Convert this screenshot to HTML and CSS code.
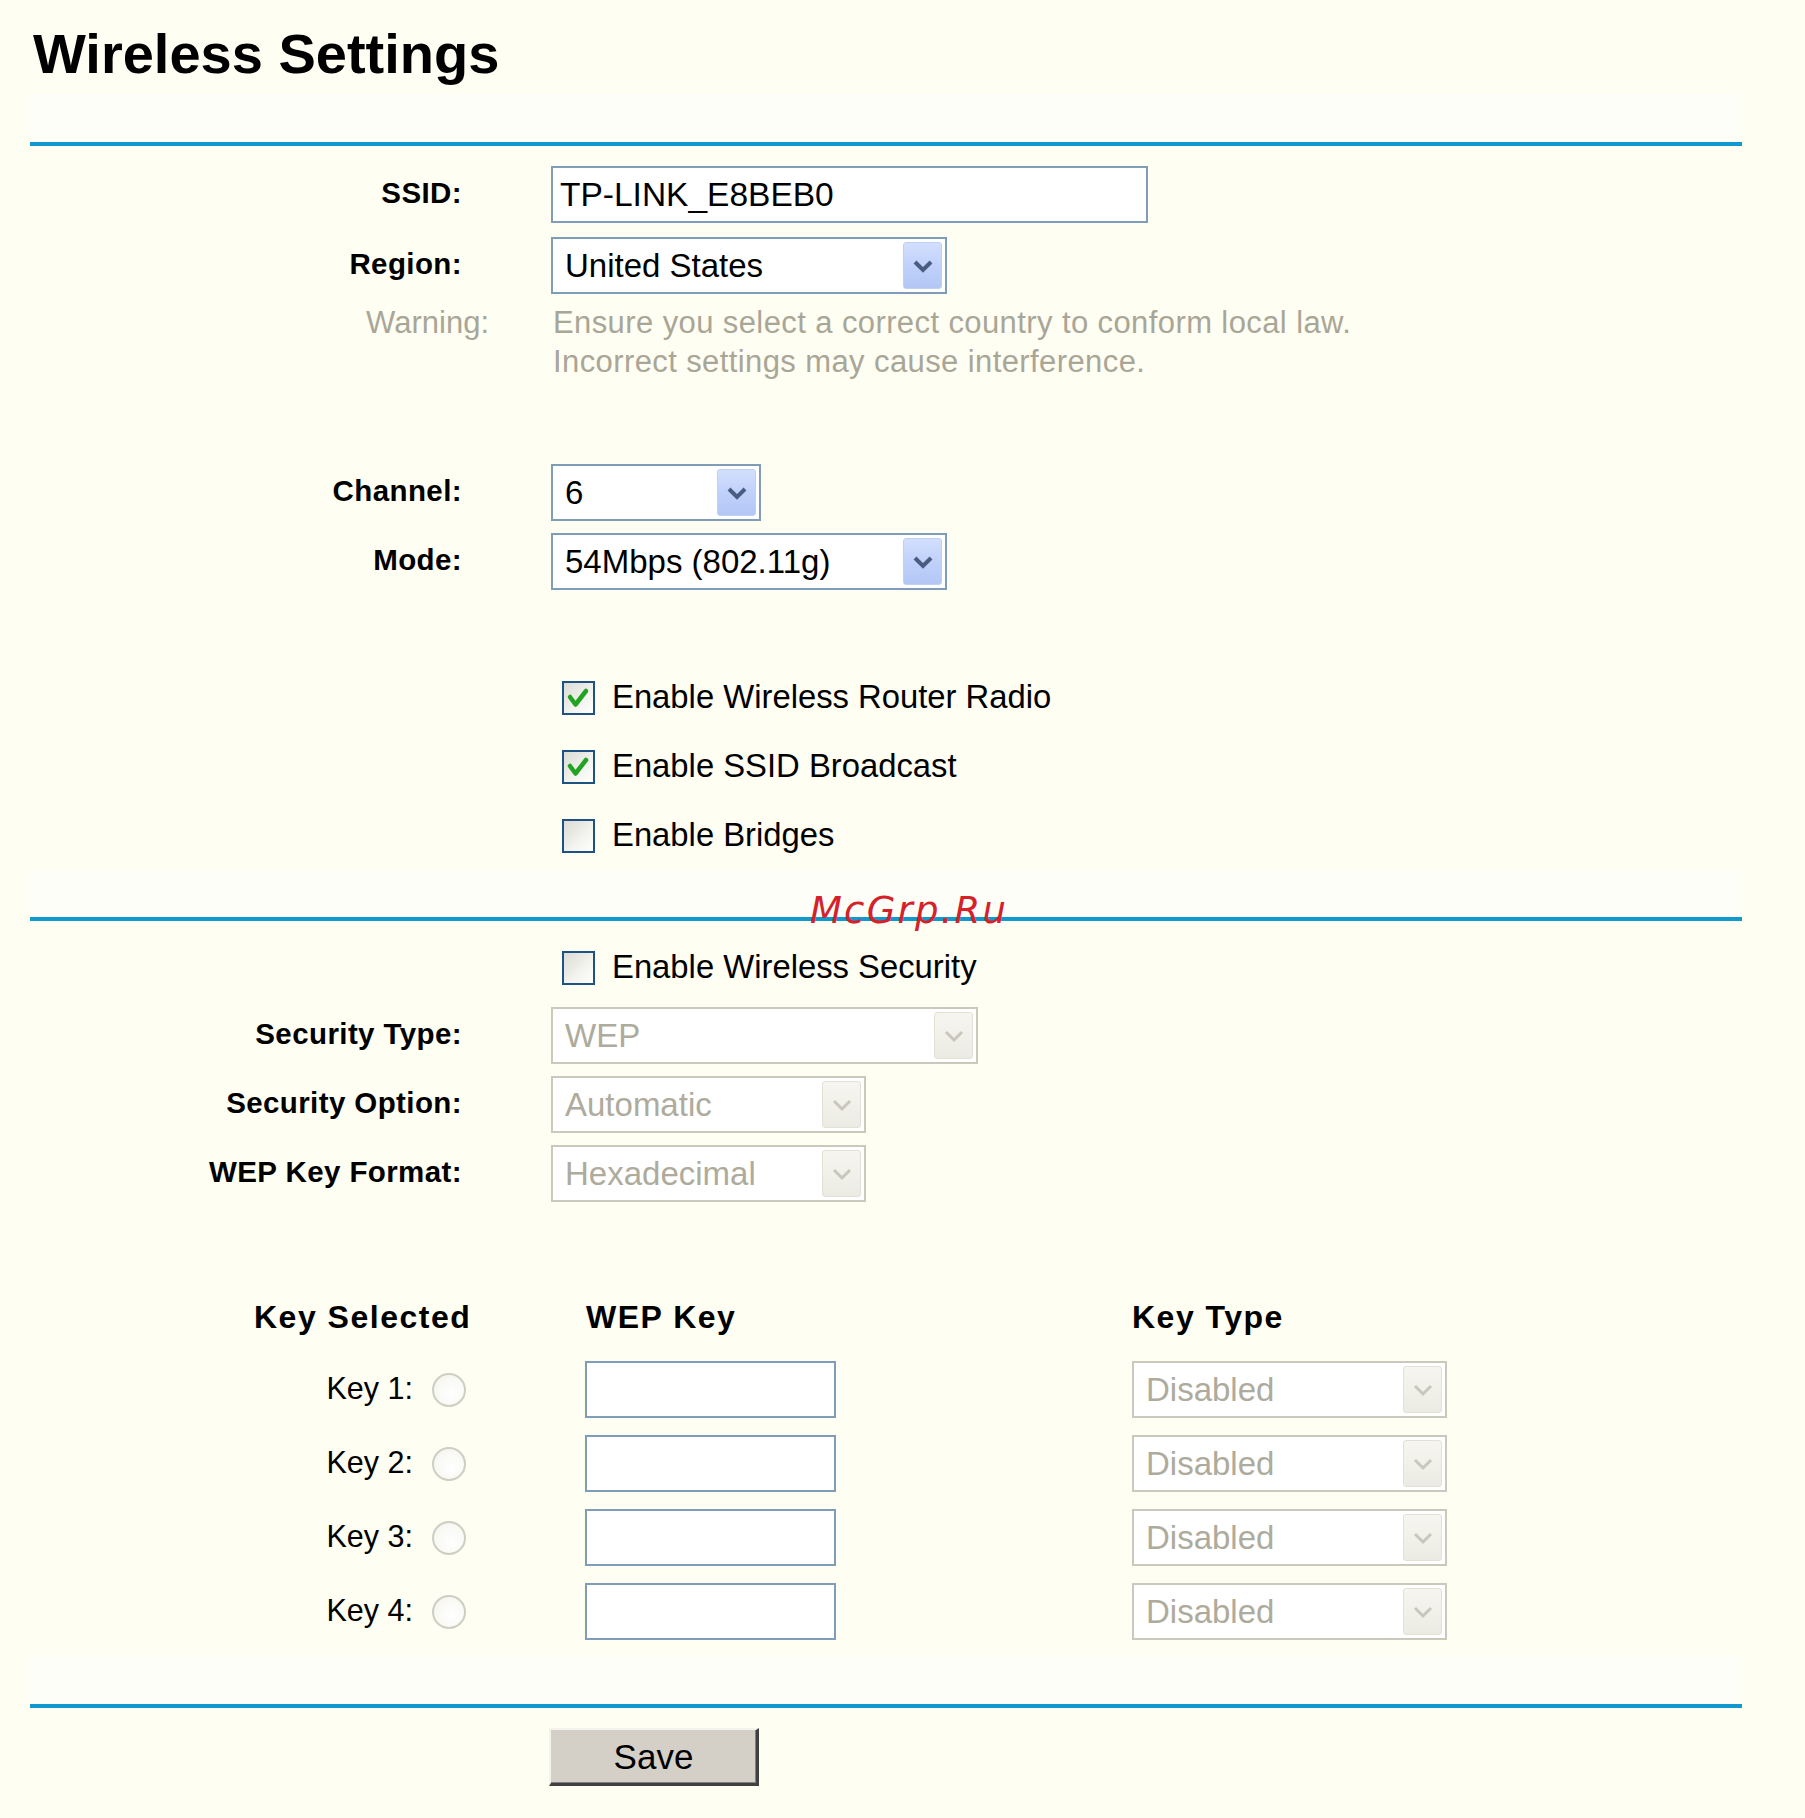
FILE: index.html
```html
<!DOCTYPE html>
<html lang="en">
<head>
<meta charset="utf-8">
<title>Wireless Settings</title>
<link rel="stylesheet" href="styles.css">
</head>
<body>
<div class="page">
  <h1 class="title">Wireless Settings</h1>
  <div class="band"></div>

  <div class="row row-ssid">
    <div class="label">SSID:</div>
    <div class="field"><input class="text-input ssid-input" type="text" value="TP-LINK_E8BEB0"></div>
  </div>

  <div class="row row-tight">
    <div class="label">Region:</div>
    <div class="field">
      <div class="select sel-wide"><span class="val">United States</span><span class="btn"><svg width="22" height="14" viewBox="0 0 22 14"><path d="M3 3 L11 11 L19 3" fill="none" stroke="#4a5c80" stroke-width="4"/></svg></span></div>
    </div>
  </div>

  <div class="warn-row">
    <div class="warn-label">Warning:</div>
    <div class="warn-text">Ensure you select a correct country to conform local law.<br>Incorrect settings may cause interference.</div>
  </div>

  <div class="row row-channel">
    <div class="label">Channel:</div>
    <div class="field">
      <div class="select sel-narrow"><span class="val">6</span><span class="btn"><svg width="22" height="14" viewBox="0 0 22 14"><path d="M3 3 L11 11 L19 3" fill="none" stroke="#4a5c80" stroke-width="4"/></svg></span></div>
    </div>
  </div>

  <div class="row row-mode">
    <div class="label">Mode:</div>
    <div class="field">
      <div class="select sel-wide"><span class="val">54Mbps (802.11g)</span><span class="btn"><svg width="22" height="14" viewBox="0 0 22 14"><path d="M3 3 L11 11 L19 3" fill="none" stroke="#4a5c80" stroke-width="4"/></svg></span></div>
    </div>
  </div>

  <div class="cb-row cb-first">
    <span class="cb"><svg width="29" height="30" viewBox="0 0 29 30"><path d="M6 14 L11.5 21.5 L22 8" fill="none" stroke="#22a322" stroke-width="4.5" stroke-linecap="round" stroke-linejoin="round"/></svg></span>
    <span class="cb-text">Enable Wireless Router Radio</span>
  </div>
  <div class="cb-row cb-next">
    <span class="cb"><svg width="29" height="30" viewBox="0 0 29 30"><path d="M6 14 L11.5 21.5 L22 8" fill="none" stroke="#22a322" stroke-width="4.5" stroke-linecap="round" stroke-linejoin="round"/></svg></span>
    <span class="cb-text">Enable SSID Broadcast</span>
  </div>
  <div class="cb-row cb-next">
    <span class="cb"></span>
    <span class="cb-text">Enable Bridges</span>
  </div>

  <div class="band band-mid"></div>

  <div class="cb-row cb-sec">
    <span class="cb"></span>
    <span class="cb-text">Enable Wireless Security</span>
  </div>

  <div class="row row-sectype">
    <div class="label">Security Type:</div>
    <div class="field">
      <div class="select disabled sel-sectype"><span class="val">WEP</span><span class="btn"><svg width="22" height="14" viewBox="0 0 22 14"><path d="M3 3 L11 11 L19 3" fill="none" stroke="#c9c7bb" stroke-width="3"/></svg></span></div>
    </div>
  </div>
  <div class="row row-tight2">
    <div class="label">Security Option:</div>
    <div class="field">
      <div class="select disabled sel-mid"><span class="val">Automatic</span><span class="btn"><svg width="22" height="14" viewBox="0 0 22 14"><path d="M3 3 L11 11 L19 3" fill="none" stroke="#c9c7bb" stroke-width="3"/></svg></span></div>
    </div>
  </div>
  <div class="row row-tight2">
    <div class="label">WEP Key Format:</div>
    <div class="field">
      <div class="select disabled sel-mid"><span class="val">Hexadecimal</span><span class="btn"><svg width="22" height="14" viewBox="0 0 22 14"><path d="M3 3 L11 11 L19 3" fill="none" stroke="#c9c7bb" stroke-width="3"/></svg></span></div>
    </div>
  </div>

  <div class="keys">
    <div class="key-head">
      <div class="kh kh-sel">Key Selected</div>
      <div class="kh kh-key">WEP Key</div>
      <div class="kh">Key Type</div>
    </div>

    <div class="key-row key-first">
      <div class="key-pick"><span class="key-label">Key 1:</span><span class="radio"></span></div>
      <div><input class="text-input key-input" type="text"></div>
      <div><div class="select disabled sel-mid"><span class="val">Disabled</span><span class="btn"><svg width="22" height="14" viewBox="0 0 22 14"><path d="M3 3 L11 11 L19 3" fill="none" stroke="#c9c7bb" stroke-width="3"/></svg></span></div></div>
    </div>
    <div class="key-row">
      <div class="key-pick"><span class="key-label">Key 2:</span><span class="radio"></span></div>
      <div><input class="text-input key-input" type="text"></div>
      <div><div class="select disabled sel-mid"><span class="val">Disabled</span><span class="btn"><svg width="22" height="14" viewBox="0 0 22 14"><path d="M3 3 L11 11 L19 3" fill="none" stroke="#c9c7bb" stroke-width="3"/></svg></span></div></div>
    </div>
    <div class="key-row">
      <div class="key-pick"><span class="key-label">Key 3:</span><span class="radio"></span></div>
      <div><input class="text-input key-input" type="text"></div>
      <div><div class="select disabled sel-mid"><span class="val">Disabled</span><span class="btn"><svg width="22" height="14" viewBox="0 0 22 14"><path d="M3 3 L11 11 L19 3" fill="none" stroke="#c9c7bb" stroke-width="3"/></svg></span></div></div>
    </div>
    <div class="key-row">
      <div class="key-pick"><span class="key-label">Key 4:</span><span class="radio"></span></div>
      <div><input class="text-input key-input" type="text"></div>
      <div><div class="select disabled sel-mid"><span class="val">Disabled</span><span class="btn"><svg width="22" height="14" viewBox="0 0 22 14"><path d="M3 3 L11 11 L19 3" fill="none" stroke="#c9c7bb" stroke-width="3"/></svg></span></div></div>
    </div>
  </div>

  <div class="band band-bottom"></div>

  <div class="save-row"><button class="save" type="button">Save</button></div>

  <div class="watermark">McGrp.Ru</div>
</div>
</body>
</html>
```

FILE: styles.css
```css
html, body {
  margin: 0;
  padding: 0;
  background: #fefef2;
}
body {
  font-family: "Liberation Sans", Arial, sans-serif;
  color: #000;
  width: 1805px;
}
.page {
  position: relative;
  padding-top: 22px;
  padding-bottom: 20px;
}
.title {
  margin: 0 0 0 33px;
  font-size: 56px;
  line-height: 64px;
  font-weight: bold;
}
.band {
  margin: 8px 0 0 30px;
  width: 1712px;
  height: 48px;
  background: #fdfef7;
  border-bottom: 4px solid #0f99cd;
}
.band-mid { margin-top: 16px; }
.band-bottom { margin-top: 16px; }

.row {
  display: flex;
  align-items: center;
  height: 57px;
}
.row-ssid { margin-top: 20px; }
.row-tight { margin-top: 14px; }
.row-channel { margin-top: 83px; }
.row-mode { margin-top: 12px; }
.row-sectype { margin-top: 22px; }
.row-tight2 { margin-top: 12px; }

.label {
  width: 462px;
  flex: none;
  text-align: right;
  font-weight: bold;
  font-size: 29.5px;
  letter-spacing: 0.4px;
  margin-top: -3px;
}
.field {
  margin-left: 89px;
  display: flex;
}

.text-input {
  box-sizing: border-box;
  height: 57px;
  border: 2px solid #7f9db9;
  background: #fff;
  font-family: "Liberation Sans", Arial, sans-serif;
  font-size: 33.5px;
  color: #000;
  padding: 0 7px;
  margin: 0;
  outline: none;
}
.ssid-input { width: 597px; }
.key-input { width: 251px; }

.select {
  display: flex;
  align-items: stretch;
  box-sizing: border-box;
  height: 57px;
  border: 2px solid #7f9db9;
  background: #fff;
  padding: 3px;
}
.select .val {
  flex: 1;
  display: flex;
  align-items: center;
  padding-left: 9px;
  font-size: 33px;
  white-space: nowrap;
}
.select .btn {
  width: 39px;
  flex: none;
  box-sizing: border-box;
  border: 1px solid #bfd0f7;
  border-radius: 3px;
  background: linear-gradient(180deg, #d3dffd 0%, #c0d1fa 50%, #b3c7f6 100%);
  display: flex;
  align-items: center;
  justify-content: center;
}
.select.disabled { border-color: #cbc9bc; }
.select.disabled .val { color: #aeab9c; }
.select.disabled .btn {
  border-color: #e3e1d6;
  background: linear-gradient(180deg, #f6f5ef 0%, #ecebe3 100%);
}
.sel-wide { width: 396px; }
.sel-narrow { width: 210px; }
.sel-sectype { width: 427px; }
.sel-mid { width: 315px; }

.warn-row {
  display: flex;
  align-items: flex-start;
  margin-top: 9px;
  color: #a9a697;
  font-size: 31px;
  line-height: 39px;
  letter-spacing: 0.4px;
}
.warn-label {
  width: 489px;
  flex: none;
  text-align: right;
  letter-spacing: 0;
}
.warn-text {
  margin-left: 64px;
}

.cb-row {
  display: flex;
  align-items: center;
  height: 34px;
  padding-left: 562px;
}
.cb-first { margin-top: 91px; }
.cb-next { margin-top: 35px; }
.cb-sec { margin-top: 30px; }
.cb {
  width: 33px;
  height: 34px;
  box-sizing: border-box;
  border: 2px solid #1d5282;
  background: linear-gradient(135deg, #dcdcd5 0%, #f3f3ef 60%, #ffffff 100%);
  display: flex;
  align-items: center;
  justify-content: center;
  flex: none;
}
.cb svg { display: block; }
.cb-text {
  margin-left: 17px;
  font-size: 32.8px;
  white-space: nowrap;
  margin-top: -3px;
}

.keys { margin-top: 95px; }
.key-head,
.key-row {
  display: grid;
  grid-template-columns: 585px 547px 1fr;
}
.key-head {
  height: 40px;
  align-items: center;
}
.kh {
  font-weight: bold;
  font-size: 32px;
  line-height: 40px;
  letter-spacing: 1.5px;
  white-space: nowrap;
}
.kh-sel { padding-left: 254px; }
.kh-key { padding-left: 1px; }
.key-row {
  height: 57px;
  align-items: center;
  margin-top: 17px;
}
.key-first { margin-top: 24px; }
.key-pick {
  display: flex;
  align-items: center;
  justify-content: flex-end;
  padding-right: 119px;
}
.key-label {
  font-size: 30.5px;
  white-space: nowrap;
  margin-top: -2px;
}
.radio {
  width: 34px;
  height: 34px;
  box-sizing: border-box;
  margin-left: 19px;
  border-radius: 50%;
  border: 2px solid #d0cec2;
  background: radial-gradient(circle at 60% 60%, #ffffff 0%, #f7f7f2 70%, #ecebe4 100%);
}

.save-row {
  margin-top: 20px;
  padding-left: 549px;
}
.save {
  width: 210px;
  height: 58px;
  box-sizing: border-box;
  background: #d4d0c8;
  border-style: solid;
  border-width: 2px 3px 3px 2px;
  border-color: #f4f3ee #404040 #404040 #f4f3ee;
  box-shadow: inset -1px -1px 0 #808080;
  font-family: "Liberation Sans", Arial, sans-serif;
  font-size: 35px;
  color: #000;
  padding: 0;
  margin: 0;
}

.watermark {
  position: absolute;
  left: 810px;
  top: 892px;
  font-family: "DejaVu Sans", sans-serif;
  font-style: oblique;
  font-size: 37px;
  line-height: 37px;
  letter-spacing: 2.2px;
  color: #d5212a;
  white-space: nowrap;
}
```
